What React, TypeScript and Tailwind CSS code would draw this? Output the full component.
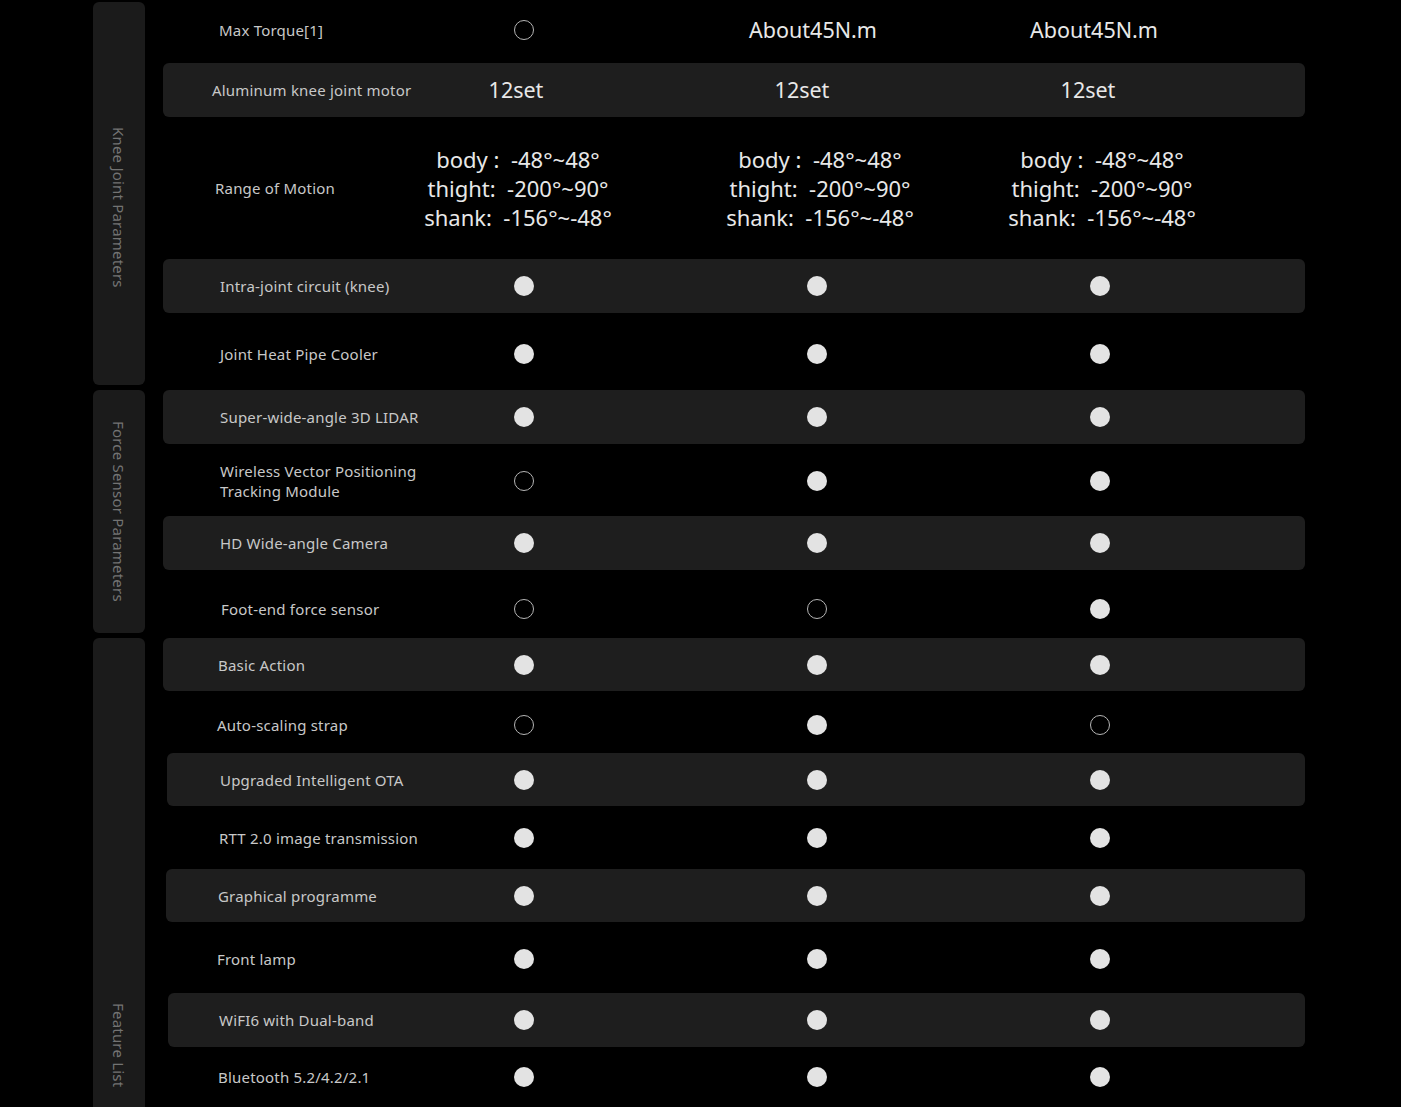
import React from "react";

type Val = "dot" | "ring" | string | string[];

type Row = {
  label: string[];
  rowCls: string;
  labelCls: string;
  vals: Val[];
  valCls?: string[];
};

const F = "dot";
const O = "ring";
const range = ["body :  -48°~48°", "thight:  -200°~90°", "shank:  -156°~-48°"];

const rows: Row[] = [
  { label: ["Max Torque[1]"], rowCls: "h-[60px] mb-[3px]", labelCls: "w-[213px] pl-[56px]", vals: [O, "About45N.m", "About45N.m"], valCls: ["", "pr-[4px]", "pr-[8px]"] },
  { label: ["Aluminum knee joint motor"], rowCls: "h-[54px] bg-[#1e1e1e] rounded-md", labelCls: "w-[213px] pl-[49px]", vals: ["12set", "12set", "12set"], valCls: ["pr-[12px]", "pr-[26px]", "pr-[20px]"] },
  { label: ["Range of Motion"], rowCls: "h-[142px]", labelCls: "w-[213px] pl-[52px]", vals: [range, range, range], valCls: ["pr-[8px]", "pl-[10px]", "pl-[8px]"] },
  { label: ["Intra-joint circuit (knee)"], rowCls: "h-[54px] bg-[#1e1e1e] rounded-md", labelCls: "w-[213px] pl-[57px]", vals: [F, F, F] },
  { label: ["Joint Heat Pipe Cooler"], rowCls: "h-[77px] pt-[5px]", labelCls: "w-[213px] pl-[57px]", vals: [F, F, F] },
  { label: ["Super-wide-angle 3D LIDAR"], rowCls: "h-[54px] bg-[#1e1e1e] rounded-md", labelCls: "w-[213px] pl-[57px]", vals: [F, F, F] },
  { label: ["Wireless Vector Positioning", "Tracking Module"], rowCls: "h-[72px] pt-[2px]", labelCls: "w-[213px] pl-[57px]", vals: [O, F, F] },
  { label: ["HD Wide-angle Camera"], rowCls: "h-[54px] bg-[#1e1e1e] rounded-md", labelCls: "w-[213px] pl-[57px]", vals: [F, F, F] },
  { label: ["Foot-end force sensor"], rowCls: "h-[68px] pt-[10px]", labelCls: "w-[213px] pl-[58px]", vals: [O, O, F] },
  { label: ["Basic Action"], rowCls: "h-[53px] bg-[#1e1e1e] rounded-md", labelCls: "w-[213px] pl-[55px]", vals: [F, F, F] },
  { label: ["Auto-scaling strap"], rowCls: "h-[62px] pt-[6px]", labelCls: "w-[213px] pl-[54px]", vals: [O, F, O] },
  { label: ["Upgraded Intelligent OTA"], rowCls: "h-[53px] bg-[#1e1e1e] rounded-md ml-[4px]", labelCls: "w-[209px] pl-[53px]", vals: [F, F, F] },
  { label: ["RTT 2.0 image transmission"], rowCls: "h-[63px]", labelCls: "w-[213px] pl-[56px]", vals: [F, F, F] },
  { label: ["Graphical programme"], rowCls: "h-[53px] bg-[#1e1e1e] rounded-md ml-[3px]", labelCls: "w-[210px] pl-[52px]", vals: [F, F, F] },
  { label: ["Front lamp"], rowCls: "h-[71px] pt-[3px]", labelCls: "w-[213px] pl-[54px]", vals: [F, F, F] },
  { label: ["WiFI6 with Dual-band"], rowCls: "h-[54px] bg-[#1e1e1e] rounded-md ml-[5px]", labelCls: "w-[208px] pl-[51px]", vals: [F, F, F] },
  { label: ["Bluetooth 5.2/4.2/2.1"], rowCls: "h-[60px]", labelCls: "w-[213px] pl-[55px]", vals: [F, F, F] },
];

const colW = ["w-[292px]", "w-[294px]", "w-[272px]"];

function Cell({ v, extra }: { v: Val; extra?: string }) {
  let content: React.ReactNode;
  if (v === "dot") {
    content = <span className="block w-[20px] h-[20px] rounded-full bg-[#e3e3e3] ml-[3px]" />;
  } else if (v === "ring") {
    content = <span className="block w-[20px] h-[20px] rounded-full border border-[#b5b5b5] ml-[3px]" />;
  } else if (Array.isArray(v)) {
    content = (
      <div className="flex flex-col items-center text-[22px] leading-[29px] text-[#e8e8e8] whitespace-pre">
        {v.map((l) => (
          <span key={l}>{l}</span>
        ))}
      </div>
    );
  } else {
    content = <span className="text-[21.5px] text-[#e8e8e8]">{v}</span>;
  }
  return <div className={`flex items-center justify-center h-full ${extra ?? ""}`}>{content}</div>;
}

export default function App() {
  return (
    <div
      className="w-[1401px] h-[1107px] overflow-hidden bg-black flex"
      style={{ fontFamily: '"Noto Sans", "Open Sans", sans-serif' }}
    >
      <div className="w-[93px] shrink-0" />
      <div className="w-[52px] shrink-0 flex flex-col gap-[5px] pt-[2px]">
        <div className="h-[383px] shrink-0 bg-[#1b1b1b] rounded-md flex justify-center pt-[125px]">
          <span className="[writing-mode:vertical-rl] text-[15px] text-[#737373] tracking-[0.2px]">Knee Joint Parameters</span>
        </div>
        <div className="h-[243px] shrink-0 bg-[#1b1b1b] rounded-md flex justify-center items-center">
          <span className="[writing-mode:vertical-rl] text-[15px] text-[#737373] tracking-[0.2px]">Force Sensor Parameters</span>
        </div>
        <div className="h-[490px] shrink-0 bg-[#1b1b1b] rounded-md flex justify-center items-end pb-[41px]">
          <span className="[writing-mode:vertical-rl] text-[15px] text-[#737373] tracking-[0.2px]">Feature List</span>
        </div>
      </div>
      <div className="w-[18px] shrink-0" />
      <div className="w-[1142px] shrink-0 flex flex-col">
        {rows.map((r, i) => (
          <div key={i} className={`flex items-center shrink-0 ${r.rowCls}`}>
            <div className={`shrink-0 flex flex-col justify-center text-[15px] leading-[20px] text-[#c8c8c8] tracking-[0.2px] ${r.labelCls}`}>
              {r.label.map((l) => (
                <span key={l} className="whitespace-nowrap">{l}</span>
              ))}
            </div>
            {r.vals.map((v, j) => (
              <div key={j} className={`shrink-0 h-full ${colW[j]}`}>
                <Cell v={v} extra={r.valCls ? r.valCls[j] : ""} />
              </div>
            ))}
          </div>
        ))}
      </div>
    </div>
  );
}
